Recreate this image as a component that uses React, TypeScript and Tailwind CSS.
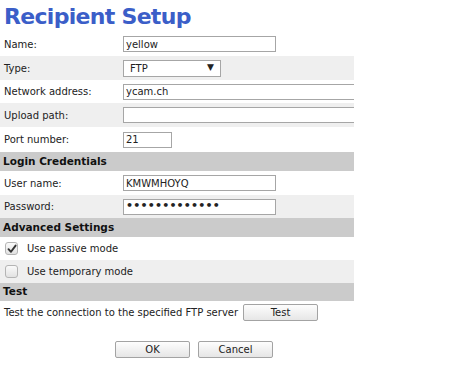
import React from "react";

const font = { fontFamily: '"DejaVu Sans", Verdana, sans-serif' };

function Row({ label, gray, children, h = "h-[24px]" }: { label: string; gray?: boolean; children?: React.ReactNode; h?: string }) {
  return (
    <div className={`flex items-center ${h} ${gray ? "bg-[#efefef]" : "bg-white"}`}>
      <div className="w-[123px] shrink-0 pl-[4px] text-[10px] text-[#222]">{label}</div>
      <div className="flex items-center">{children}</div>
    </div>
  );
}

function Header({ title, h = "h-[19px]" }: { title: string; h?: string }) {
  return (
    <div className={`flex items-center ${h} bg-[#cbcbcb] pl-[3px] text-[10.5px] font-bold text-[#111]`}>{title}</div>
  );
}

function TextInput({ value, w, type = "text" }: { value: string; w: string; type?: string }) {
  return (
    <input
      readOnly
      type={type}
      defaultValue={value}
      className={`${w} h-[16px] shrink-0 border border-[#a6a6a6] bg-white pl-[2px] text-[#222] outline-none ${type === "password" ? "text-[11px] tracking-[0.2px] font-bold" : "text-[10px]"}`}
      style={font}
    />
  );
}

function Check({ checked }: { checked?: boolean }) {
  return (
    <div className="flex h-[13px] w-[13px] items-center justify-center rounded-[3px] border border-[#b4b4b4] bg-gradient-to-b from-[#fafafa] to-[#e2e2e2]">
      {checked && (
        <svg width="10" height="10" viewBox="0 0 10 10">
          <path d="M1.5 5.2 L4 7.8 L8.6 1.6" fill="none" stroke="#333" strokeWidth="1.9" strokeLinecap="round" strokeLinejoin="round" />
        </svg>
      )}
    </div>
  );
}

function Btn({ label }: { label: string }) {
  return (
    <button className="flex h-[17px] w-[75px] items-center justify-center rounded-[2px] border border-[#a3a3a3] bg-gradient-to-b from-[#fdfdfd] to-[#e6e6e6] text-[10px] text-[#222]" style={font}>
      {label}
    </button>
  );
}

export default function App() {
  return (
    <div className="h-[368px] w-[450px] bg-white" style={font}>
      <div className="w-[354px] overflow-hidden">
        <div className="h-[32px] pl-[4px] pt-[6px] text-[22px] font-bold leading-[22px] tracking-[-0.7px] text-[#3b5ec8]">
          Recipient Setup
        </div>
        <Row label="Name:">
          <TextInput value="yellow" w="w-[153px]" />
        </Row>
        <Row label="Type:" gray>
          <div className="flex h-[17px] w-[98px] items-center justify-between border border-[#a6a6a6] bg-white pl-[6px] pr-[6px] text-[10px] text-[#222]">
            <span>FTP</span>
            <span className="text-[9px]">▼</span>
          </div>
        </Row>
        <Row label="Network address:" h="h-[23px]">
          <TextInput value="ycam.ch" w="w-[260px]" />
        </Row>
        <Row label="Upload path:" gray>
          <TextInput value="" w="w-[260px]" />
        </Row>
        <Row label="Port number:" h="h-[25px]">
          <TextInput value="21" w="w-[49px]" />
        </Row>
        <Header title="Login Credentials" />
        <Row label="User name:">
          <TextInput value="KMWMHOYQ" w="w-[153px]" />
        </Row>
        <Row label="Password:" gray h="h-[23px]">
          <TextInput value="abcdefghijklm" w="w-[153px]" type="password" />
        </Row>
        <Header title="Advanced Settings" />
        <div className="flex h-[23px] items-center gap-[9px] bg-white pl-[5px] text-[10px] text-[#222]">
          <Check checked />
          <span>Use passive mode</span>
        </div>
        <div className="flex h-[23px] items-center gap-[9px] bg-[#efefef] pl-[5px] text-[10px] text-[#222]">
          <Check />
          <span>Use temporary mode</span>
        </div>
        <Header title="Test" h="h-[18px]" />
        <div className="flex h-[23px] items-center gap-[5px] pl-[4px] text-[10px] text-[#222]">
          <span>Test the connection to the specified FTP server</span>
          <Btn label="Test" />
        </div>
        <div className="flex gap-[8px] pl-[115px] pt-[17px]">
          <Btn label="OK" />
          <Btn label="Cancel" />
        </div>
      </div>
    </div>
  );
}
